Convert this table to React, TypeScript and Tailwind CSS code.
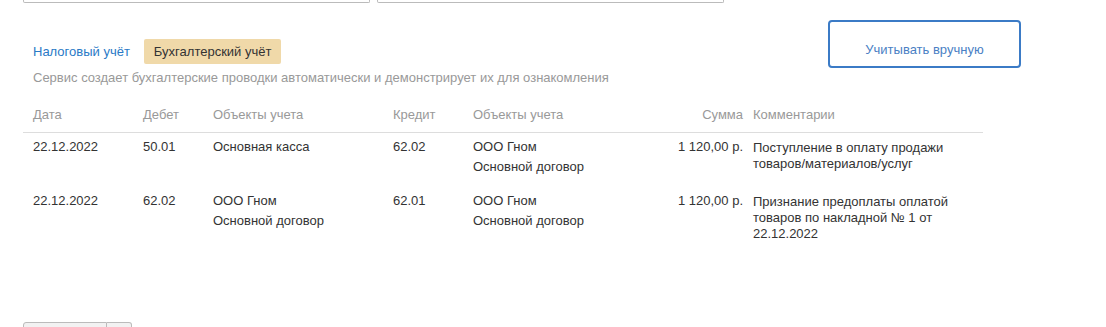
const COLS = 'grid grid-cols-[110px_70px_180px_80px_177px_103px_240px]'

const ROWS = [
  {
    date: '22.12.2022',
    debit: '50.01',
    debitObjects: ['Основная касса'],
    credit: '62.02',
    creditObjects: ['ООО Гном', 'Основной договор'],
    sum: '1 120,00 р.',
    comment: 'Поступление в оплату продажи товаров/материалов/услуг',
  },
  {
    date: '22.12.2022',
    debit: '62.02',
    debitObjects: ['ООО Гном', 'Основной договор'],
    credit: '62.01',
    creditObjects: ['ООО Гном', 'Основной договор'],
    sum: '1 120,00 р.',
    comment: 'Признание предоплаты оплатой товаров по накладной № 1 от 22.12.2022',
  },
]

export default function App() {
  return (
    <div className="w-[1106px] h-[327px] overflow-hidden bg-white text-[13px] text-[#333] font-['Liberation_Sans',Arial,sans-serif]">
      {/* inputs cut off at the top */}
      <div className="flex gap-[7px] pl-[23px]">
        <div className="w-[347px] h-[3px] border border-t-0 border-[#bbb] rounded-b-[2px]" />
        <div className="w-[347px] h-[3px] border border-t-0 border-[#bbb] rounded-b-[2px]" />
      </div>

      <div className="flex pl-[23px]">
        <div className="w-[805px] pt-[36px]">
          {/* tabs */}
          <div className="flex gap-[4px]">
            <span className="px-[10px] h-[25px] leading-[25px] text-[#2a7ac6]">Налоговый учёт</span>
            <span className="px-[10px] h-[25px] leading-[25px] bg-[#f0d9a9] rounded-[2px] text-[#333]">
              Бухгалтерский учёт
            </span>
          </div>
          <p className="mt-[6px] pl-[10px] leading-[16px] text-[#999]">
            Сервис создает бухгалтерские проводки автоматически и демонстрирует их для ознакомления
          </p>
        </div>
        <button className="mt-[17px] w-[193px] h-[48px] pt-[12px] flex items-center justify-center border-2 border-[#3b7bc6] rounded-[4px] text-[#4a7fc4] bg-white">
          Учитывать вручную
        </button>
      </div>

      {/* postings table */}
      <div className="ml-[23px] mt-[19px] w-[960px]">
        <div className={`${COLS} leading-5 pb-[7px] border-b border-[#ddd] text-[#999]`}>
          <div className="pl-[10px]">Дата</div>
          <div className="pl-[10px]">Дебет</div>
          <div className="pl-[10px]">Объекты учета</div>
          <div className="pl-[10px]">Кредит</div>
          <div className="pl-[10px]">Объекты учета</div>
          <div className="text-right">Сумма</div>
          <div className="pl-[10px]">Комментарии</div>
        </div>
        {ROWS.map((r, i) => (
          <div key={i} className={`${COLS} leading-5 pt-[4px] pb-[10px]`}>
            <div className="pl-[10px]">{r.date}</div>
            <div className="pl-[10px]">{r.debit}</div>
            <div className="pl-[10px]">
              {r.debitObjects.map((o) => (
                <div key={o}>{o}</div>
              ))}
            </div>
            <div className="pl-[10px]">{r.credit}</div>
            <div className="pl-[10px]">
              {r.creditObjects.map((o) => (
                <div key={o}>{o}</div>
              ))}
            </div>
            <div className="text-right whitespace-nowrap">{r.sum}</div>
            <div className="pl-[10px] pr-[20px] pt-[3px] leading-[16px]">{r.comment}</div>
          </div>
        ))}
      </div>

      {/* button group cut off at the bottom */}
      <div className="flex ml-[23px] mt-[70px]">
        <div className="w-[84px] h-[20px] bg-[#f2f2f2] border border-[#bbb] rounded-tl-[3px]" />
        <div className="w-[25px] h-[20px] bg-[#f2f2f2] border border-l-0 border-[#bbb] rounded-tr-[3px]" />
      </div>
    </div>
  )
}
